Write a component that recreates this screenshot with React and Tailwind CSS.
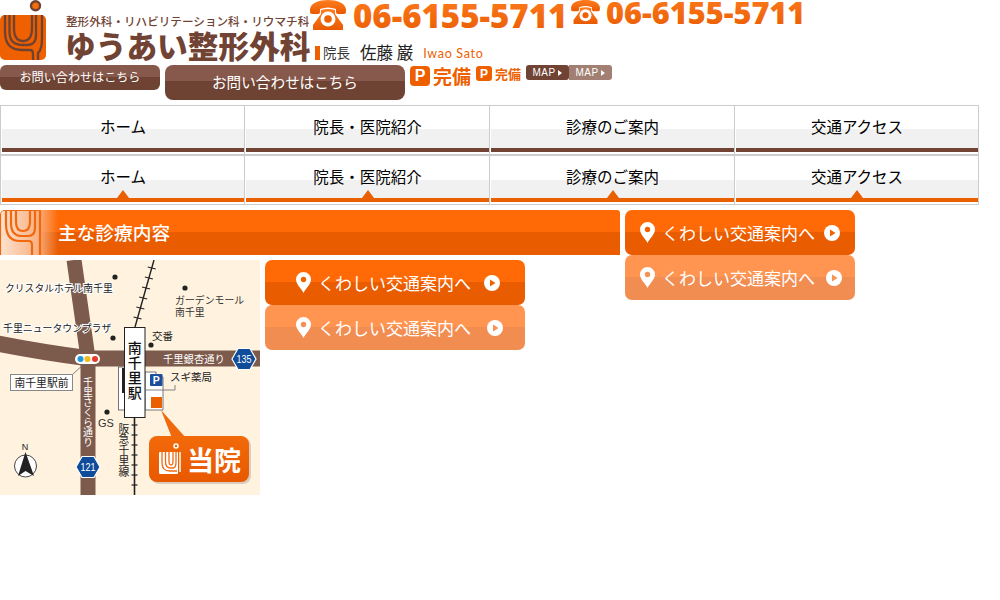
import React from 'react';

const jp = "font-['Noto_Sans_CJK_JP',sans-serif]";
const navItems = ['ホーム', '院長・医院紹介', '診療のご案内', '交通アクセス'];
const SVG_FONT = "'Noto Sans CJK JP', sans-serif";

function Logo() {
  return (
    <svg width="46" height="60" viewBox="0 0 46 60" className="shrink-0">
      <rect x="0" y="15" width="46" height="45" rx="5" fill="#ee6000" />
      <circle cx="35.500" cy="5.800" r="4.500" fill="#f07010" stroke="#6f4232" strokeWidth="2.400" />
      <g fill="none" stroke="#6f4232" strokeWidth="2.300">
        <path d="M5 15V32Q5 50 22 50H30Q33 50 33 54V60" />
        <path d="M9.500 15V32Q9.500 45 23 45H27Q36 45 36 35V15" />
        <path d="M14 15V28Q14 41 23 41Q32 41 32 28V15" />
        <path d="M42 15V38Q42 50 38 53V60" />
      </g>
    </svg>
  );
}

function PhoneIcon({ w, h }) {
  return (
    <svg width={w} height={h} viewBox="0 0 36 30" className="shrink-0">
      <defs>
        <linearGradient id="phoneFill" x1="0" y1="0" x2="0" y2="1">
          <stop offset="0" stopColor="#ff7d20" />
          <stop offset="1" stopColor="#e85a00" />
        </linearGradient>
      </defs>
      <path
        d="M0 9C1 3 9 0 18 0S35 3 36 9V12Q36 14 34 14H28Q26 14 26 12V9Q18 6 10 9V12Q10 14 8 14H2Q0 14 0 12Z"
        fill="url(#phoneFill)"
      />
      <path d="M11 10Q18 8 25 10V14L33 25V30H3V25L11 14Z" fill="url(#phoneFill)" />
      <circle cx="18" cy="19" r="7.500" fill="#fff" />
      <circle cx="18" cy="19" r="3.800" fill="#ee6000" />
    </svg>
  );
}

// number has a gradient fill, so it is set as svg text
function PhoneNumber({ width, height, size, baseline }) {
  return (
    <svg width={width} height={height} className="shrink-0 overflow-visible">
      <defs>
        <linearGradient id="numFill" x1="0" y1="0" x2="0" y2="1">
          <stop offset="0" stopColor="#ff7d20" />
          <stop offset="1" stopColor="#e85a00" />
        </linearGradient>
      </defs>
      <text x="0" y={baseline} fontSize={size} fontWeight="800" fill="url(#numFill)" fontFamily="'Open Sans', sans-serif">06-6155-5711</text>
    </svg>
  );
}

function Pin({ hole }) {
  return (
    <svg width="15" height="21" viewBox="0 0 15 21" className="shrink-0">
      <path d="M7.500 0A7.500 7.500 0 0 1 15 7.500C15 12.500 9.500 16.500 7.500 21C5.500 16.500 0 12.500 0 7.500A7.500 7.500 0 0 1 7.500 0Z" fill="#fff" />
      <circle cx="7.500" cy="7.500" r="2.700" fill={hole} />
    </svg>
  );
}

function PlayDot({ fill }) {
  return (
    <svg width="16" height="16" viewBox="0 0 16 16" className="shrink-0">
      <circle cx="8" cy="8" r="8" fill="#fff" />
      <path d="M6 4.500L11.500 8L6 11.500Z" fill={fill} />
    </svg>
  );
}

function AccessButton({ wide, light }) {
  const bg = light
    ? 'bg-[linear-gradient(#ff9550_49%,#f28d52_49%)]'
    : 'bg-[linear-gradient(#ff6a06_49%,#e95c00_49%)]';
  return (
    <div className={`flex h-[45px] items-center rounded-[7px] text-white ${bg} ${wide ? 'w-[260px] pl-[31px]' : 'w-[230px] pl-[15px]'}`}>
      <Pin hole={light ? '#f79255' : '#f06200'} />
      <span className={`ml-[7px] w-[153px] whitespace-nowrap text-[17px] leading-none ${jp}`}>くわしい交通案内へ</span>
      <span className={wide ? (light ? 'ml-4' : 'ml-[13px]') : (light ? 'ml-[11px]' : 'ml-[9px]')}>
        <PlayDot fill={light ? '#f79255' : '#f06200'} />
      </span>
    </div>
  );
}

function NavRow({ active }) {
  return (
    <div className="grid h-[50px] w-[979px] grid-cols-[245px_245px_245px_244px] border-y border-[#ccc]">
      {navItems.map((label, i) => (
        <div key={label} className={`flex flex-col border-r border-[#ccc] pb-[2px] pl-px ${i === 0 ? 'border-l' : ''}`}>
          <div className={`relative flex flex-1 items-center justify-center text-[15.5px] leading-none text-black ${jp} ${active ? 'bg-[linear-gradient(#fff_57%,#f1f1f1_57%)]' : 'bg-[linear-gradient(#fff_55%,#f1f1f1_55%)]'}`}>
            {label}
            {active && (
              <span className="absolute bottom-0 left-1/2 h-0 w-0 -translate-x-1/2 border-x-[6px] border-b-[8px] border-x-transparent border-b-[#ea5f00]" />
            )}
          </div>
          <div className={`h-1 ${active ? 'bg-[#ea5f00]' : 'bg-[#714334]'}`} />
        </div>
      ))}
    </div>
  );
}

function HeadingMark() {
  return (
    <svg width="58" height="45" viewBox="0 0 58 45" className="shrink-0">
      <defs>
        <linearGradient id="markFade" x1="0" y1="0" x2="1" y2="0">
          <stop offset="0" stopColor="#fde2cf" />
          <stop offset="0.65" stopColor="#f9b183" />
          <stop offset="1" stopColor="#f9b183" stopOpacity="0" />
        </linearGradient>
      </defs>
      <path d="M4 0H58V45H0V4Q0 0 4 0Z" fill="url(#markFade)" />
      <path d="M0.500 45V4Q0.500 0.500 4 0.500H40" fill="none" stroke="#f0690f" strokeWidth="1.200" />
      <g fill="none" stroke="#f0690f" strokeWidth="2.200">
        <path d="M6 0V14Q6 31 20 31H29Q32 31 32 35V45" />
        <path d="M11 0V13Q11 26 22 26H28Q35 26 35 18V0" />
        <path d="M16 0V12Q16 21 23 21Q30 21 30 12V0" />
        <path d="M40 0V45" />
      </g>
    </svg>
  );
}

function RoadShield({ x, y, label }) {
  return (
    <g transform={`translate(${x} ${y})`}>
      <path d="M-12 0L-6 -10.500H6L12 0L6 10.500H-6Z" fill="#0f4c9a" stroke="#fff" strokeWidth="1.200" />
      <text y="4" textAnchor="middle" fontSize="11" fill="#fff" fontFamily="'Liberation Sans', sans-serif" textLength="15" lengthAdjust="spacingAndGlyphs">{label}</text>
    </g>
  );
}

function MapLabel({ x, y, size = 10, children }) {
  return (
    <text x={x} y={y} fontSize={size} fill="#222" stroke="#fff" strokeWidth="2" paintOrder="stroke" fontFamily={SVG_FONT}>{children}</text>
  );
}

function AccessMap() {
  const topTicks = [8, 18, 28, 38, 48, 58];
  const bottomTicks = [165, 175, 185, 195, 205, 215, 225];
  return (
    <svg width="260" height="235" viewBox="0 0 260 235" className="block shrink-0 bg-[#fff3e0]">
      <defs>
        <linearGradient id="badgeFill" x1="0" y1="0" x2="0" y2="1">
          <stop offset="0" stopColor="#f26a0a" />
          <stop offset="1" stopColor="#e85800" />
        </linearGradient>
      </defs>
      <path d="M74 0L88 98V235" fill="none" stroke="#7c5a4c" strokeWidth="15" />
      <path d="M-5 83Q40 92 90 98.500H260" fill="none" stroke="#7c5a4c" strokeWidth="16" />

      <path d="M154 0L135 67" stroke="#222" strokeWidth="1.400" />
      {topTicks.map((y) => (
        <path key={y} d={`M${154 - y * 0.284 - 4} ${y - 1}L${154 - y * 0.284 + 4} ${y + 1}`} stroke="#222" strokeWidth="1.200" />
      ))}
      <path d="M134.500 157V235" stroke="#222" strokeWidth="1.600" />
      {bottomTicks.map((y) => (
        <path key={y} d={`M131.500 ${y}H137.500`} stroke="#222" strokeWidth="1.200" />
      ))}

      <rect x="118.500" y="107" width="8" height="43" fill="#fff" stroke="#555" strokeWidth="0.800" />
      <rect x="122" y="108" width="2" height="25" fill="#222" />
      <path d="M145 112H156V117H163V150H145Z" fill="#fff" stroke="#555" strokeWidth="0.800" />
      <rect x="150" y="114" width="12.500" height="12" rx="1" fill="#1b4e9b" />
      <text x="156.200" y="124" textAnchor="middle" fontSize="10.500" fontWeight="700" fill="#fff" fontFamily="'Liberation Sans', sans-serif">P</text>
      <rect x="151" y="137" width="11" height="11" fill="#ea5f00" />
      <path d="M175 125V130H146" fill="none" stroke="#666" strokeWidth="0.800" />

      <rect x="124.500" y="67.500" width="20.500" height="90" fill="#fff" stroke="#222" strokeWidth="1" />
      <text x="134.700" y="81" fontSize="14" fontWeight="500" fill="#111" fontFamily={SVG_FONT} writingMode="vertical-rl" letterSpacing="1">南千里駅</text>

      <circle cx="115" cy="17" r="2.600" fill="#222" />
      <circle cx="185" cy="28" r="2.600" fill="#222" />
      <circle cx="113" cy="78" r="2.600" fill="#222" />
      <circle cx="151" cy="85" r="2.600" fill="#222" />
      <circle cx="107" cy="152" r="2.600" fill="#222" />

      <MapLabel x={5} y={32} size={9.800}>クリスタルホテル南千里</MapLabel>
      <text x="175" y="44" fontSize="9.900" fill="#333" fontFamily={SVG_FONT}>ガーデンモール</text>
      <text x="175" y="56" fontSize="9.900" fill="#333" fontFamily={SVG_FONT}>南千里</text>
      <MapLabel x={3} y={72} size={9.900}>千里ニュータウンプラザ</MapLabel>
      <text x="152" y="80" fontSize="10.500" fill="#222" fontFamily={SVG_FONT}>交番</text>
      <text x="163" y="103" fontSize="10.300" fill="#fff" fontFamily={SVG_FONT}>千里銀杏通り</text>
      <text x="170" y="121" fontSize="10.500" fill="#222" fontFamily={SVG_FONT}>スギ薬局</text>
      <text x="98" y="167" fontSize="11" fill="#333" fontFamily="'Liberation Sans', sans-serif">GS</text>

      <rect x="75" y="94" width="25" height="10" rx="5" fill="#fff" />
      <circle cx="80.500" cy="99" r="3" fill="#1e9ad6" />
      <circle cx="87.500" cy="99" r="3" fill="#f6b81a" />
      <circle cx="95" cy="99" r="3" fill="#e8392c" />

      <path d="M73 114L84 104" stroke="#666" strokeWidth="0.800" />
      <rect x="10.500" y="114.500" width="62" height="16" fill="#fff" stroke="#888" strokeWidth="1" />
      <text x="14.500" y="126.500" fontSize="10.800" fill="#222" fontFamily={SVG_FONT}>南千里駅前</text>

      <text x="88" y="117" fontSize="10" fill="#fff" fontFamily={SVG_FONT} writingMode="vertical-rl">千里さくら通り</text>
      <text x="124" y="163" fontSize="10.800" fill="#222" fontFamily={SVG_FONT} writingMode="vertical-rl">阪急千里線</text>

      <RoadShield x={244} y={99} label="135" />
      <RoadShield x={88} y={207} label="121" />

      <text x="25" y="190" textAnchor="middle" fontSize="9" fill="#222" fontFamily="'Liberation Sans', sans-serif">N</text>
      <circle cx="25.500" cy="206" r="11" fill="#fff" stroke="#444" strokeWidth="1" />
      <path d="M25.500 192L34 216L25.500 211L18 216Z" fill="#222" />

      <path d="M161 150L172 178H186Z" fill="#f0690c" />
      <rect x="151" y="178" width="100" height="46" rx="8" fill="#000" fillOpacity="0.15" />
      <rect x="149" y="176" width="100" height="46" rx="8" fill="url(#badgeFill)" />
      <rect x="159" y="192" width="19" height="22" rx="1" fill="#fff" />
      <circle cx="176" cy="186" r="2" fill="none" stroke="#fff" strokeWidth="1.500" />
      <path d="M180 192V212" stroke="#fff" strokeWidth="1.500" />
      <g fill="none" stroke="#ef6a10" strokeWidth="1.300">
        <path d="M162 192V203Q162 211 170 211H177" />
        <path d="M165.500 192V202Q165.500 208 171 208H173Q176 208 176 202V192" />
        <path d="M169 192V201Q169 205 171 205Q173 205 173 201V192" />
      </g>
      <text x="187" y="211" fontSize="27" fontWeight="700" fill="#fff" fontFamily={SVG_FONT}>当院</text>
    </svg>
  );
}

function PBadge({ small }) {
  return (
    <div className="mt-px flex items-start">
      <span className={`flex items-center justify-center bg-[#ee5f00] font-bold text-white font-['Liberation_Sans',sans-serif] ${small ? 'h-[15px] w-4 rounded-[3px] text-[12px]' : 'h-5 w-5 rounded-[4px] text-[16px]'}`}>P</span>
      <span className={`font-bold leading-none text-[#ee6000] ${jp} ${small ? 'ml-[3px] mt-px text-[13px]' : 'ml-[3px] text-[19px]'}`}>完備</span>
    </div>
  );
}

function MapTag({ light }) {
  return (
    <div className={`flex h-[15px] w-[43px] items-center justify-center gap-[3px] text-[10px] leading-none tracking-[0.4px] text-white font-['Liberation_Sans',sans-serif] ${light ? 'rounded-r-[3px] bg-[#a17f73]' : 'rounded-[3px] bg-[#714334]'}`}>
      MAP
      <span className="h-0 w-0 border-y-[3px] border-l-[4px] border-y-transparent border-l-white" />
    </div>
  );
}

export default function App() {
  return (
    <div className="h-[600px] w-[1000px] overflow-hidden bg-white">
      {/* header */}
      <div className="flex h-[65px] items-start">
        <Logo />
        <div className="ml-5 w-[244px] shrink-0 pt-[14px] text-[#714334]">
          <div className={`whitespace-nowrap text-[11.6px] font-medium leading-[14px] ${jp}`}>整形外科・リハビリテーション科・リウマチ科</div>
          <div className={`-ml-px mt-px whitespace-nowrap text-[30.7px] font-black leading-[32px] ${jp}`}>ゆうあい整形外科</div>
        </div>
        <div className="flex flex-col">
          <div className="flex h-[45px] items-start">
            <PhoneIcon w={36} h={30} />
            <span className="ml-[7px]">
              <PhoneNumber width={218} height={34} size={33} baseline={28} />
            </span>
            <PhoneIcon w={29} h={24} />
            <span className="ml-[6px]">
              <PhoneNumber width={200} height={30} size={30.7} baseline={24} />
            </span>
          </div>
          <div className={`ml-[5px] flex h-[15px] items-center leading-none ${jp}`}>
            <span className="h-[14px] w-[5px] bg-[#ee6000]" />
            <span className="ml-[3px] text-[13.5px] text-[#333]">院長</span>
            <span className="ml-[10px] text-[16.5px] text-[#222]">佐藤 巌</span>
            <span className="ml-[10px] pt-[3px] text-[12.5px] tracking-[0.7px] text-[#ee6000] font-['Lato',sans-serif]">Iwao Sato</span>
          </div>
        </div>
      </div>

      <div className="flex h-[35px] items-start gap-[5px]">
        <div className={`flex h-[25px] w-[160px] items-center justify-center rounded-[6px] bg-[linear-gradient(#87594c_50%,#6e4333_50%)] text-[12.1px] leading-none text-white ${jp}`}>お問い合わせはこちら</div>
        <div className={`flex h-[35px] w-[240px] items-center justify-center rounded-[8px] bg-[linear-gradient(#87594c_45%,#6e4333_45%)] text-[14.6px] leading-none text-white ${jp}`}>お問い合わせはこちら</div>
        <PBadge />
        <PBadge small />
        <div className="flex">
          <MapTag />
          <MapTag light />
        </div>
      </div>

      {/* nav */}
      <div className="mt-[5px]">
        <NavRow />
        <NavRow active />
      </div>

      {/* main */}
      <div className="mt-[5px] flex items-start gap-[5px]">
        <div className="w-[620px] shrink-0">
          <div className="flex h-[45px] items-center overflow-hidden rounded-tl-[5px] rounded-tr-[3px] bg-[linear-gradient(#ff6a06_49%,#e95c00_49%)]">
            <HeadingMark />
            <h2 className={`text-[18.7px] font-medium leading-none text-white ${jp}`}>主な診療内容</h2>
          </div>
          <div className="mt-[5px] flex gap-[5px]">
            <AccessMap />
            <div>
              <AccessButton wide />
              <AccessButton wide light />
            </div>
          </div>
        </div>
        <div>
          <AccessButton />
          <AccessButton light />
        </div>
      </div>
    </div>
  );
}
